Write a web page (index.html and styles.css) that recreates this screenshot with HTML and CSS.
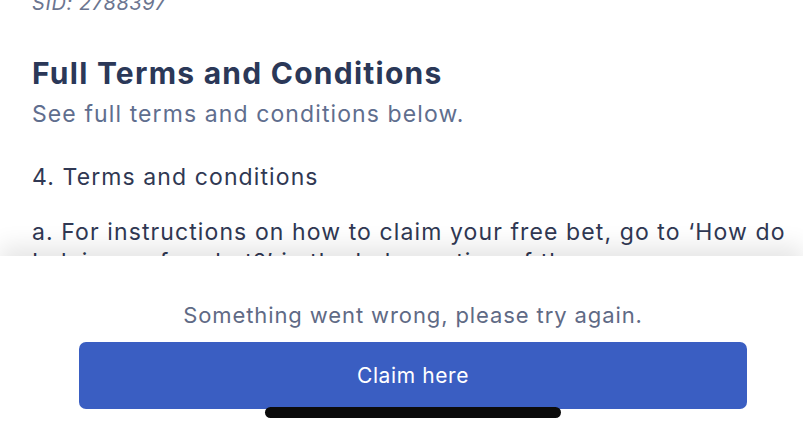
FILE: index.html
```html
<!DOCTYPE html>
<html lang="en">
<head>
<meta charset="utf-8">
<title>Full Terms and Conditions</title>
<link rel="stylesheet" href="styles.css">
</head>
<body>
<main class="content">
  <p class="sid">SID: 2788397</p>
  <h1 class="title">Full Terms and Conditions</h1>
  <p class="subtitle">See full terms and conditions below.</p>
  <p class="body first">4. Terms and conditions</p>
  <p class="body">a. For instructions on how to claim your free bet, go to ‘How do I claim my free bet?’ in the help section of the app.</p>
</main>
<section class="sheet">
  <p class="error">Something went wrong, please try again.</p>
  <button class="claim" type="button">Claim here</button>
  <div class="home-indicator"></div>
</section>
</body>
</html>
```
FILE: styles.css
```css
html, body {
  margin: 0;
  padding: 0;
  background: #ffffff;
  width: 803px;
  height: 433px;
  overflow: hidden;
  font-family: Inter, "Noto Sans", sans-serif;
}

.content {
  padding: 0 12px 0 32px;
  margin-top: -9px;
}

.sid {
  margin: 0;
  font-size: 20px;
  line-height: 24px;
  font-style: italic;
  letter-spacing: 0.6px;
  color: #6b7590;
}

.title {
  margin: 40px 0 0;
  font-size: 30px;
  line-height: 36px;
  font-weight: 700;
  letter-spacing: 1.25px;
  color: #2b3858;
}

.subtitle {
  margin: 9px 0 0;
  font-size: 23px;
  line-height: 28px;
  letter-spacing: 1.1px;
  color: #5f6e8e;
}

.body {
  margin: 25px 0 0;
  font-size: 23px;
  line-height: 30px;
  letter-spacing: 1.1px;
  color: #303853;
}

.body.first {
  margin-top: 34px;
}

.sheet {
  position: absolute;
  left: 0;
  right: 0;
  top: 256px;
  bottom: 0;
  padding-left: 23px;
  background: #ffffff;
  box-shadow: 0 -10px 22px rgba(0, 0, 0, 0.10);
  display: flex;
  flex-direction: column;
  align-items: center;
}

.error {
  margin: 45px 0 0;
  font-size: 22px;
  line-height: 28px;
  letter-spacing: 0.9px;
  color: #5f6a85;
}

.claim {
  margin-top: 13px;
  width: 668px;
  height: 67px;
  border: none;
  border-radius: 7px;
  background: #3a5ec2;
  color: #ffffff;
  font-family: Inter, "Noto Sans", sans-serif;
  font-size: 21px;
  letter-spacing: 0.6px;
  padding: 0;
}

.home-indicator {
  position: absolute;
  left: 265px;
  top: 151px;
  width: 296px;
  height: 11px;
  border-radius: 6px;
  background: #0b0b0b;
}
```
